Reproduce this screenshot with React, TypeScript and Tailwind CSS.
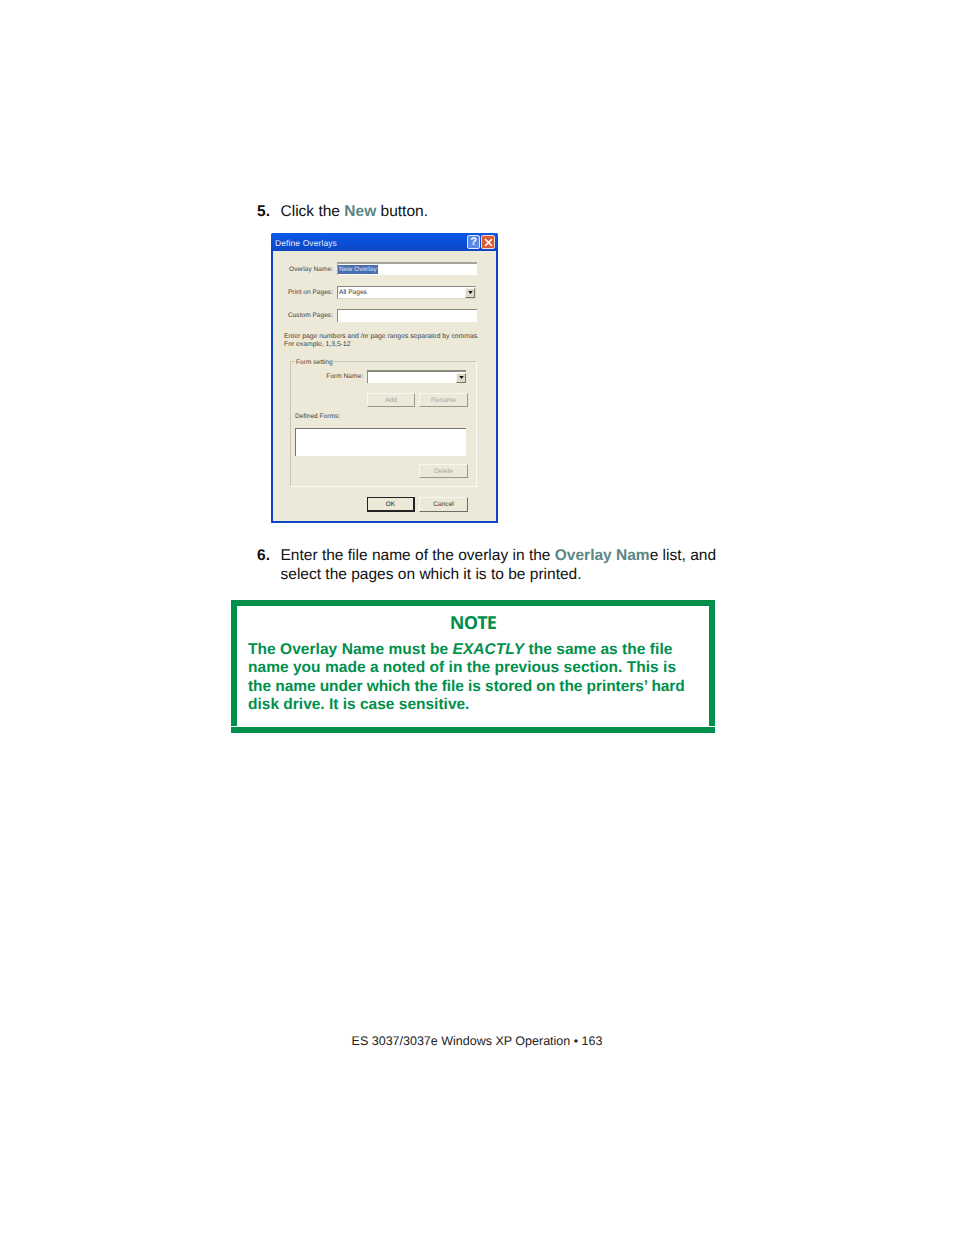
function Btn({ label, strong, off, className = "" }: { label: string; strong?: boolean; off?: boolean; className?: string }) {
  return (
    <div className={`flex items-center justify-center border bg-[#ece9d8] pt-[2px] text-[6.6px] leading-none ${strong ? "border-[#222] border-r-2 border-b-2 text-[#222]" : off ? "border-[#f8f7f0] border-r-[#9a988c] border-b-[#9a988c] text-[#aaa899]" : "border-[#f8f7f0] border-r-[#6f6e66] border-b-[#6f6e66] text-[#333]"} ${className}`}>
      {label}
    </div>
  );
}

function Arrow() {
  return (
    <div className="flex h-[10px] w-[10px] items-center justify-center border border-[#f4f3ec] border-r-[#77756b] border-b-[#77756b] bg-[#ddd9c6]">
      <svg width="5" height="3" viewBox="0 0 6 4"><path d="M0 0h6L3 4z" fill="#111" /></svg>
    </div>
  );
}

function Field({ label, children, className = "", labelClass = "pt-[2px]" }: { label: string; children: React.ReactNode; className?: string; labelClass?: string }) {
  return (
    <div className={`flex items-center gap-[4px] ${className}`}>
      <div className={`w-[60px] whitespace-nowrap text-right text-[6.6px] leading-none text-[#444] ${labelClass}`}>{label}</div>
      {children}
    </div>
  );
}

function Dialog() {
  return (
    <div className="ml-[14px] mt-[12px] flex h-[290px] w-[227px] flex-col rounded-t-[2px] border-2 border-t-0 border-[#0c45c8] bg-[#ece9d8] font-['Liberation_Sans',sans-serif] [text-rendering:geometricPrecision]">
      <div className="-mx-[2px] flex h-[18px] items-center justify-between rounded-t-[3px] bg-gradient-to-b from-[#0a5ae6] via-[#0a4fd8] to-[#0c47c4] pl-[4px] pr-[3px]">
        <span className="pt-[2px] text-[8.5px] leading-none tracking-[0.1px] text-[#e6ecf8]">Define Overlays</span>
        <div className="flex gap-[1px]">
          <div className="flex h-[14px] w-[13px] items-center justify-center rounded-[2px] border border-[#dbe6fb] bg-[#5a8ae6] text-[11px] font-bold leading-none text-white">?</div>
          <div className="flex h-[14px] w-[14px] items-center justify-center rounded-[2px] border border-[#f0dcd0] bg-[#dc5a34]">
            <svg width="9" height="9" viewBox="0 0 9 9"><path d="M1 1l7 7M8 1L1 8" stroke="#fff" strokeWidth="1.7" /></svg>
          </div>
        </div>
      </div>

      <div className="flex flex-col pr-[19px]">
        <Field label="Overlay Name:" className="mt-[11px]" labelClass="pt-[4px]">
          <div className="flex h-[13px] flex-1 items-center border-t-2 border-l border-t-[#a5a49a] border-l-[#a5a49a] bg-white">
            <span className="bg-[#4a6cb0] px-[1px] text-[6.6px] leading-[9px] text-[#dfe5f2]">New Overlay</span>
          </div>
        </Field>
        <Field label="Print on Pages:" className="mt-[11px]">
          <div className="mr-[1px] flex h-[13px] flex-1 items-center justify-between border border-[#8b8a80] border-r-[#d8d5c4] border-b-[#d8d5c4] bg-white">
            <span className="pl-[1px] pt-[1px] text-[6.6px] leading-none text-[#333]">All Pages</span>
            <Arrow />
          </div>
        </Field>
        <Field label="Custom Pages:" className="mt-[10px]">
          <div className="h-[13px] flex-1 border-t border-l border-[#8b8a80] bg-white" />
        </Field>
      </div>

      <div className="mt-[11px] pl-[11px] text-[6.8px] leading-[8px] text-[#444]">
        <div className="whitespace-nowrap">Enter page numbers and /or page ranges separated by commas.</div>
        <div>For example, 1,3,5-12</div>
      </div>

      <div className="relative ml-[17px] mt-[12px] h-[126px] w-[187px] border border-[#c9c6b6] border-b-[#fbfaf5] border-r-[#fbfaf5] pl-[4px]">
        <div className="absolute -top-[3px] left-[4px] bg-[#ece9d8] px-[1px] text-[6.6px] leading-[8px] text-[#444]">Form setting</div>
        <div className="mt-[8px] flex items-center">
          <div className="w-[68px] pt-[2px] text-right text-[6.6px] leading-none text-[#444]">Form Name:</div>
          <div className="ml-[4px] flex h-[13px] w-[99px] items-center justify-end border-t-2 border-l border-t-[#8b8a80] border-l-[#8b8a80] bg-white">
            <Arrow />
          </div>
        </div>
        <div className="ml-[72px] mt-[10px] flex gap-[4px]">
          <Btn label="Add" off className="h-[14px] w-[48px]" />
          <Btn label="Rename" off className="h-[14px] w-[49px]" />
        </div>
        <div className="mt-[6px] text-[6.6px] leading-[8px] text-[#444]">Defined Forms:</div>
        <div className="mt-[7px] h-[28px] w-[171px] border-t border-l border-[#77756b] bg-white" />
        <Btn label="Delete" off className="ml-[124px] mt-[8px] h-[14px] w-[49px]" />
      </div>

      <div className="ml-[94px] mt-[10px] flex gap-[4px]">
        <Btn label="OK" strong className="h-[15px] w-[48px]" />
        <Btn label="Cancel" className="h-[15px] w-[49px]" />
      </div>
    </div>
  );
}

export default function App() {
  return (
    <div className="relative h-[1235px] w-[954px] bg-white font-['Liberation_Sans',Arial,sans-serif] text-[15.52px] leading-[19px] text-[#111] [text-rendering:geometricPrecision]">
      <div className="flex flex-col pl-[257px] pt-[202px]">
        <div className="flex">
          <span className="w-[23.5px] font-bold">5.</span>
          <span>Click the <b className="text-[#5b8584]">New</b> button.</span>
        </div>
        <Dialog />
        <div className="mt-[23px] flex">
          <span className="w-[23.5px] font-bold">6.</span>
          <span className="w-[445px]">Enter the file name of the overlay in the <b className="text-[#5b8584]">Overlay Nam</b>e list, and<br />select the pages on which it is to be printed.</span>
        </div>
      </div>

      <div className="ml-[231px] mt-[16px] flex w-[484px] flex-col text-[#00904c]">
        <div className="h-[126px] border-[6px] border-b-0 border-[#00904c]">
          <div className="mt-[6px] text-center font-['Open_Sans',sans-serif] text-[18px] font-bold leading-[22px] tracking-[-0.8px]">NOTE</div>
          <div className="ml-[11px] mt-[6.7px] w-[460px] text-[15.5px] font-bold leading-[18.6px]">
            <div className="tracking-[0.05px]">The Overlay Name must be <i>EXACTLY</i> the same as the file</div>
            <div className="tracking-[0.03px]">name you made a noted of in the previous section. This is</div>
            <div className="tracking-[-0.07px]">the name under which the file is stored on the printers’ hard</div>
            <div>disk drive. It is case sensitive.</div>
          </div>
        </div>
        <div className="mt-[1px] h-[6px] bg-[#00904c]" />
      </div>

      <div className="mt-[300px] text-center text-[12.5px] leading-[16px] text-[#222]">ES 3037/3037e Windows XP Operation • 163</div>
    </div>
  );
}
